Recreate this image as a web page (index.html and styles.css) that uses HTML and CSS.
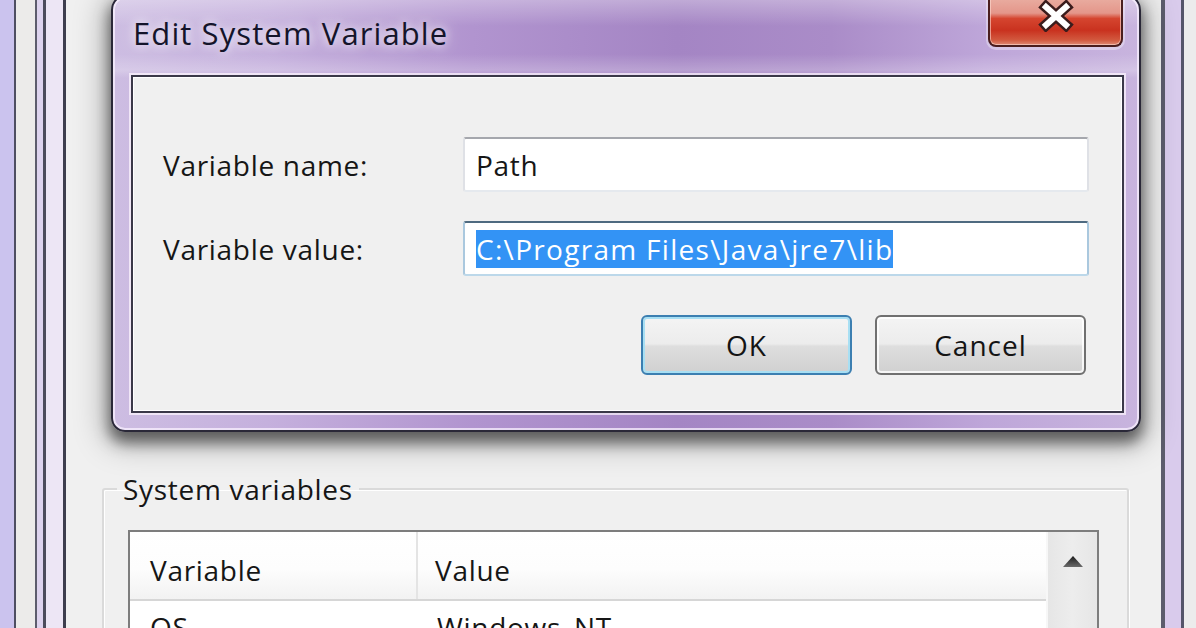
FILE: index.html
```html
<!DOCTYPE html>
<html lang="en">
<head>
<meta charset="utf-8">
<title>Edit System Variable</title>
<link rel="stylesheet" href="styles.css">
</head>
<body>
<div class="desktop">
  <div class="frame-left"></div>
  <main class="parent-client">
    <fieldset class="group">
      <legend>System variables</legend>
      <div class="listview">
        <div class="lv-main">
          <div class="lv-header">
            <div class="lv-col lv-col1">Variable</div>
            <div class="lv-col lv-col2">Value</div>
          </div>
          <div class="lv-row">
            <div class="lv-cell lv-col1">OS</div>
            <div class="lv-cell lv-col2">Windows_NT</div>
          </div>
        </div>
        <div class="lv-scroll">
          <svg class="arrow" width="22" height="13" viewBox="0 0 22 13">
            <defs>
              <linearGradient id="ag" x1="0" y1="0" x2="0" y2="1">
                <stop offset="0" stop-color="#1c1c1c"/>
                <stop offset="1" stop-color="#6a6a6a"/>
              </linearGradient>
            </defs>
            <polygon points="11,1 21,12 1,12" fill="url(#ag)"/>
          </svg>
        </div>
      </div>
    </fieldset>
  </main>
  <div class="frame-right"></div>

  <section class="dialog">
    <header class="titlebar">
      <h1 class="title">Edit System Variable</h1>
      <button class="close" type="button" aria-label="Close">
        <svg width="36" height="32" viewBox="0 0 36 32">
          <path d="M8 7 L28 25 M28 7 L8 25" stroke="#3a1c1c" stroke-width="11" stroke-linecap="square" fill="none"/>
          <path d="M8 7 L28 25 M28 7 L8 25" stroke="#ffffff" stroke-width="6" stroke-linecap="square" fill="none"/>
        </svg>
      </button>
    </header>
    <div class="client">
      <div class="form">
        <label class="lbl">Variable name:</label>
        <div class="field">Path</div>
        <label class="lbl">Variable value:</label>
        <div class="field focused"><span class="sel">C:\Program Files\Java\jre7\lib</span></div>
      </div>
      <div class="buttons">
        <button class="btn default" type="button">OK</button>
        <button class="btn" type="button">Cancel</button>
      </div>
    </div>
  </section>
</div>
</body>
</html>
```

FILE: styles.css
```css
* { box-sizing: border-box; }
html, body { margin: 0; padding: 0; }
body {
  width: 1196px;
  height: 628px;
  overflow: hidden;
  background: #f0f0f0;
  font-family: "Open Sans", "Noto Sans", sans-serif;
  color: #161616;
  letter-spacing: 0.7px;
}
.desktop {
  position: relative;
  display: flex;
  width: 1196px;
  height: 628px;
  overflow: hidden;
}
.frame-left {
  flex: none;
  width: 66px;
  background: linear-gradient(to right,
    #cbc3ee 0 14px, #4e4e62 14px 16px, #ecebea 16px 35px,
    #5c5c6c 35px 37px, #ddd3ee 37px 43px, #4c4c5c 43px 46px,
    #ede6f5 46px 63px, #3e3e4e 63px 66px);
}
.frame-right {
  flex: none;
  width: 35px;
  background: linear-gradient(to right,
    #5c5c6c 0 4px, #d9cbec 4px 20px, #55556a 20px 23px, #ececec 23px 35px);
}
.parent-client {
  flex: 1;
  min-width: 0;
  background: #f0f0f0;
}

/* group box */
.group {
  margin: 470px 32px 0 36px;
  padding: 0;
  min-width: 0;
  border: 2px solid #dadada;
  border-radius: 3px;
  box-shadow: inset 1px 1px 0 #fff, 1px 1px 0 #fff;
}
.group legend {
  margin-left: 13px;
  padding: 0 6px;
  font-size: 28px;
  line-height: 38px;
}

/* list view */
.listview {
  display: flex;
  height: 150px;
  margin: 22px 28px 0 24px;
  border: 2px solid #7d7d7d;
  background: #fff;
}
.lv-main {
  flex: 1;
  display: flex;
  flex-direction: column;
}
.lv-header {
  display: flex;
  height: 69px;
  border-bottom: 2px solid #d6d6d6;
  background: linear-gradient(#ffffff 0%, #fdfdfd 55%, #f2f2f2 100%);
}
.lv-col1 { flex: none; width: 288px; }
.lv-col2 { flex: 1; }
.lv-col {
  padding: 19px 0 0 20px;
  font-size: 28px;
  line-height: 38px;
}
.lv-header .lv-col1 { border-right: 2px solid #e4e4e4; }
.lv-header .lv-col2 { padding-left: 17px; }
.lv-row { display: flex; padding-top: 7px; }
.lv-cell {
  padding-left: 20px;
  font-size: 28px;
  line-height: 38px;
}
.lv-row .lv-col2 { padding-left: 19px; }
.lv-scroll {
  flex: none;
  width: 51px;
  display: flex;
  justify-content: center;
  align-items: flex-start;
  padding-top: 23px;
  background: linear-gradient(to right, #e6e6e6, #ededed 50%, #e6e6e6);
  border-left: 2px solid #f7f7f7;
}

/* dialog window */
.dialog {
  position: absolute;
  left: 111px;
  top: -6px;
  width: 1030px;
  height: 438px;
  display: flex;
  flex-direction: column;
  padding: 0 15px 17px 18px;
  border: 2px solid #2a2838;
  border-radius: 16px 16px 14px 14px;
  background:
    linear-gradient(to bottom, rgba(255,255,255,0.35) 0px, rgba(255,255,255,0) 30px, rgba(255,255,255,0) 58px, rgba(255,255,255,0.22) 74px, rgba(255,255,255,0) 82px),
    linear-gradient(to right, #cdbde2 0%, #c5b0dd 15%, #b194cf 35%, #a485c4 55%, #aa8cc8 70%, #bea6d9 85%, #c8b4de 100%);
  box-shadow: inset 0 0 0 2px rgba(250,242,255,0.75), 0 9px 14px 2px rgba(0,0,0,0.5), 0 6px 30px 8px rgba(0,0,0,0.25);
}
.titlebar {
  flex: none;
  height: 79px;
  display: flex;
  justify-content: space-between;
  align-items: flex-start;
  padding-left: 2px;
}
.title {
  margin: 0;
  padding-top: 17px;
  font-size: 31px;
  line-height: 40px;
  font-weight: normal;
  letter-spacing: 1.1px;
  color: #14142a;
  text-shadow: 0 0 10px rgba(255,255,255,0.95), 0 0 18px rgba(255,255,255,0.7);
}
.close {
  width: 135px;
  height: 51px;
  margin: 0 1px 0 0;
  padding: 4px 0 0;
  display: flex;
  justify-content: center;
  align-items: flex-start;
  border: 2px solid #4a1e1e;
  border-top: none;
  border-radius: 0 0 8px 8px;
  background: linear-gradient(#eab0a4 0%, #e4968a 35%, #d5452f 46%, #c9321f 70%, #d2593f 90%, #de8a74 100%);
  box-shadow: inset 0 0 0 1px rgba(255,220,210,0.6), 0 1px 0 2px rgba(255,255,255,0.35);
}

.client {
  flex: 1;
  padding: 60px 33px 0 30px;
  border: 2px solid #3a3848;
  background: #f0f0f0;
  box-shadow: inset 0 0 0 1px #fff, 0 0 0 2px rgba(255,248,255,0.7);
}
.form {
  display: grid;
  grid-template-columns: 300px 1fr;
  row-gap: 29px;
  align-items: center;
}
.lbl {
  font-size: 28px;
  line-height: 38px;
}
.field {
  height: 55px;
  display: flex;
  align-items: center;
  padding-left: 11px;
  font-size: 28px;
  line-height: 38px;
  background: #fff;
  border: 2px solid;
  border-color: #a5a7ad #dfe1e6 #e5e9ee #dfe1e6;
  border-radius: 3px;
}
.field.focused {
  border-color: #4e6a80 #aac8de #bcd8ea #aac8de;
}
.sel {
  background: #3393f5;
  color: #fff;
  letter-spacing: 1.3px;
}
.buttons {
  display: flex;
  justify-content: flex-end;
  gap: 23px;
  margin-top: 39px;
  padding-right: 3px;
}
.btn {
  width: 211px;
  height: 60px;
  padding: 0;
  font-family: inherit;
  font-size: 28px;
  line-height: 38px;
  letter-spacing: 1px;
  color: #141414;
  border: 2px solid #707070;
  border-radius: 6px;
  background: linear-gradient(#f4f4f4 0%, #ececec 48%, #dedede 52%, #d0d0d0 100%);
  box-shadow: inset 0 0 0 2px rgba(255,255,255,0.8);
}
.btn.default {
  border-color: #3c7fb1;
  box-shadow: inset 0 0 0 2px #a8dff3;
}
```
